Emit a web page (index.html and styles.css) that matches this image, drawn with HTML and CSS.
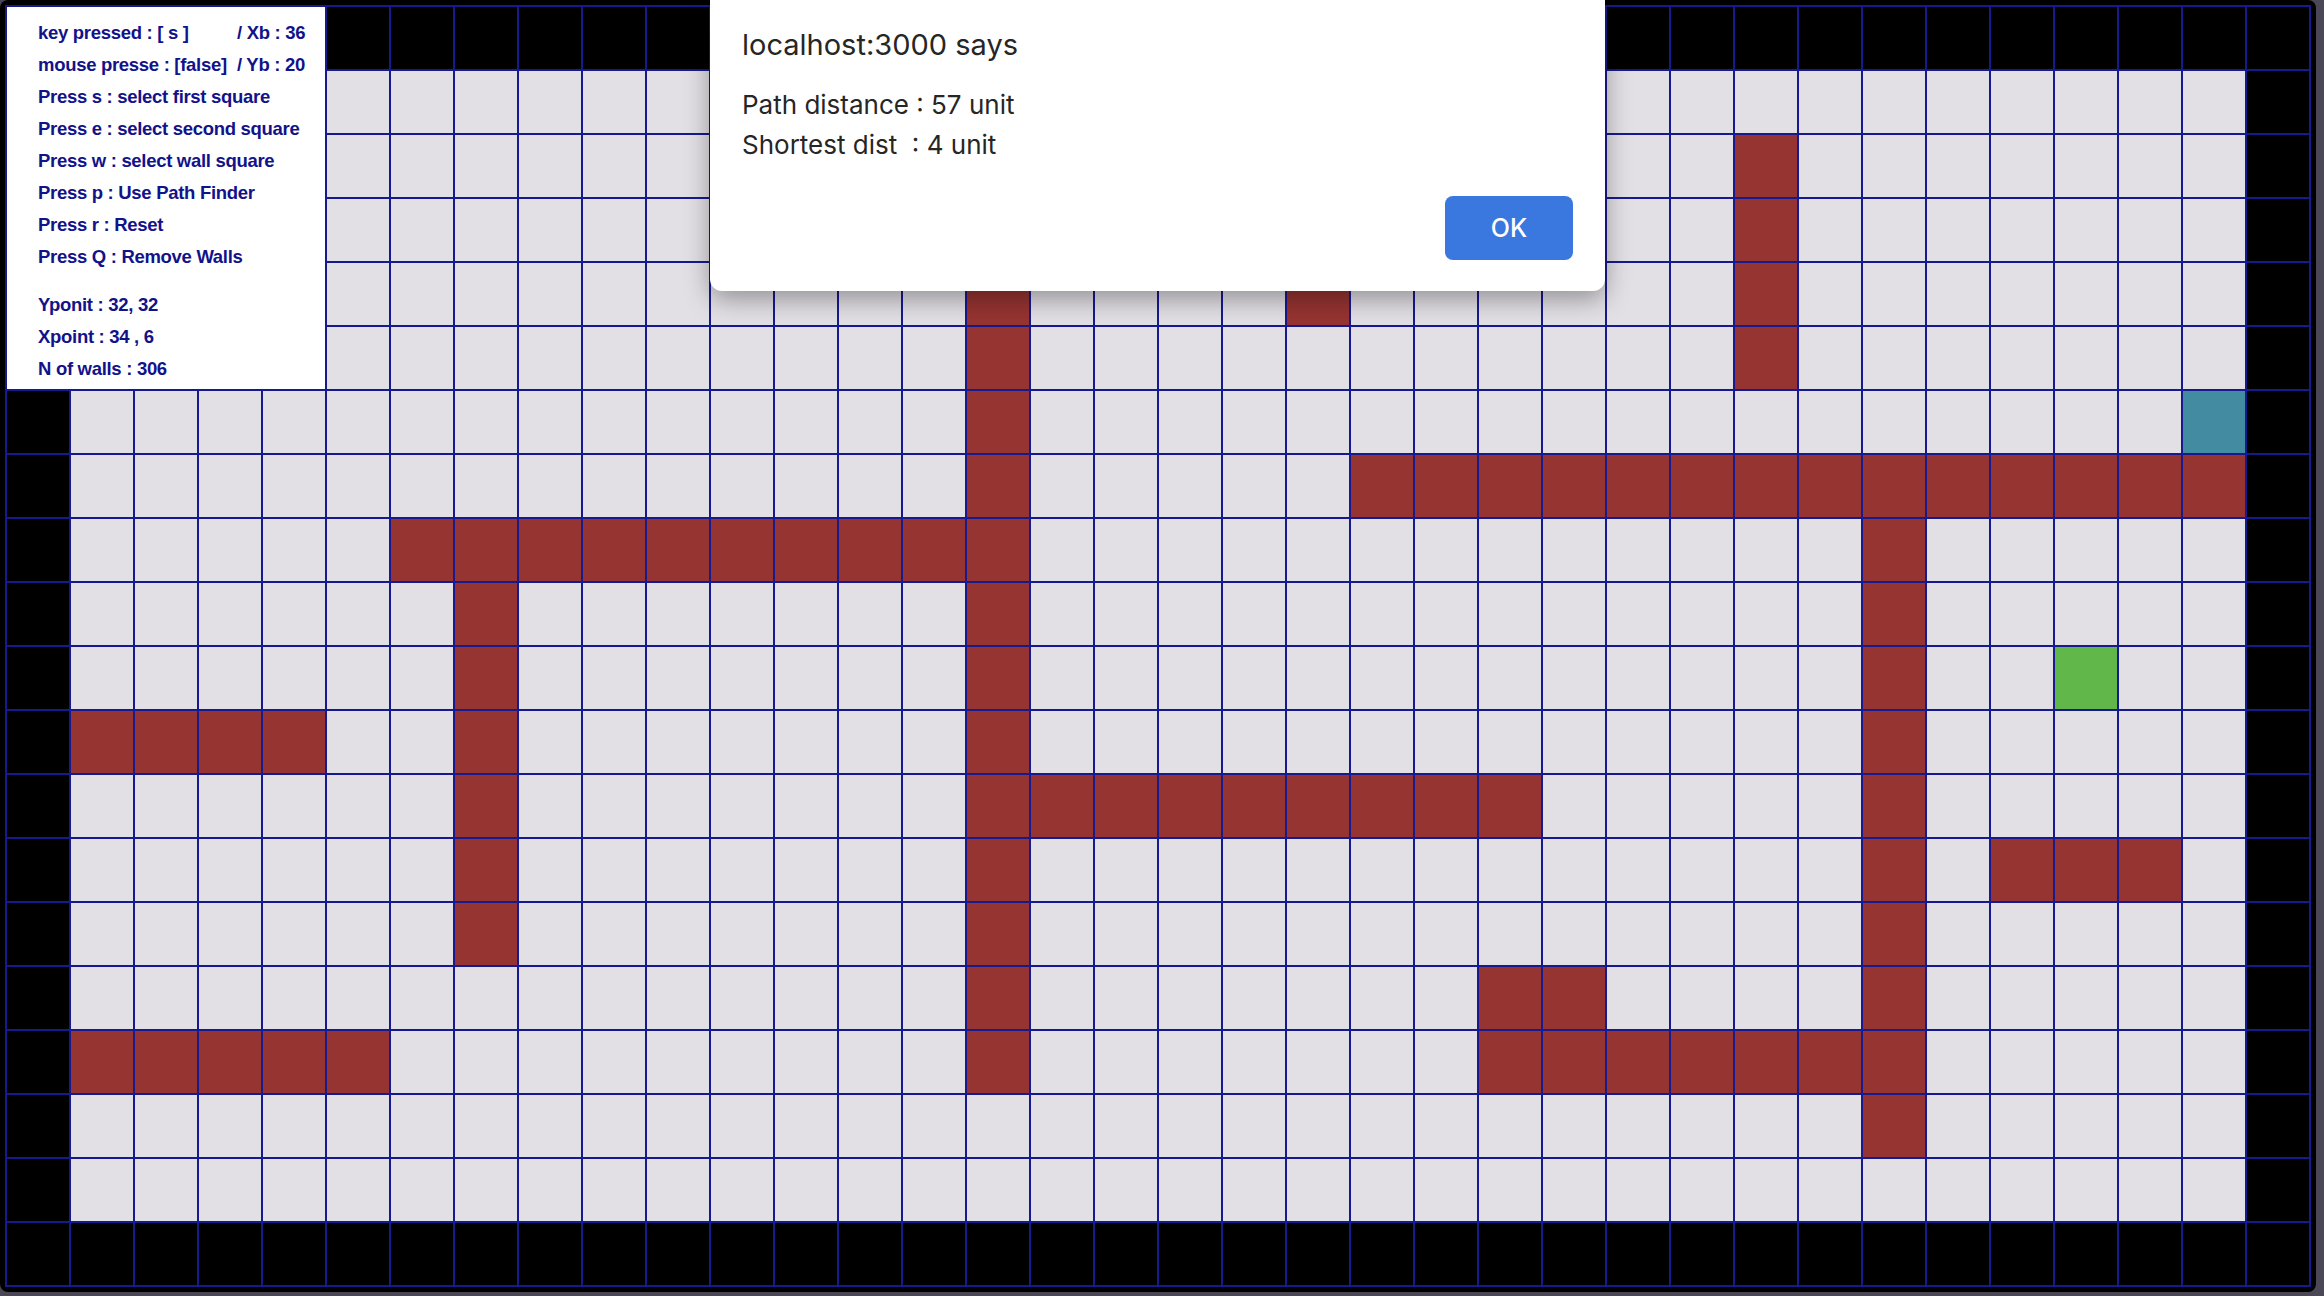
FILE: index.html
```html
<!DOCTYPE html>
<html lang="en">
<head>
<meta charset="utf-8">
<title>Path Finder</title>
<link rel="stylesheet" href="styles.css">
</head>
<body>
<div class="window">
  <div class="board" id="board"></div>
  <div class="info">
    <div class="row"><span>key pressed : [ s ]</span><span>/ Xb : 36</span></div>
    <div class="row"><span>mouse presse : [false]</span><span>/ Yb : 20</span></div>
    <div>Press s : select first square</div>
    <div>Press e : select second square</div>
    <div>Press w : select wall square</div>
    <div>Press p : Use Path Finder</div>
    <div>Press r : Reset</div>
    <div>Press Q : Remove Walls</div>
    <div class="gap">Yponit : 32, 32</div>
    <div>Xpoint : 34 , 6</div>
    <div>N of walls : 306</div>
  </div>
</div>
<div class="alert">
  <div class="alert-title">localhost:3000 says</div>
  <div class="alert-msg">
    <div>Path distance : 57 unit</div>
    <div class="pre">Shortest dist  : 4 unit</div>
  </div>
  <div class="alert-actions"><button class="ok">OK</button></div>
</div>
<script src="script.js"></script>
</body>
</html>
```
FILE: styles.css
```css
html, body {
  margin: 0;
  padding: 0;
}
body {
  background: #4a4856;
  width: 2324px;
  height: 1296px;
  overflow: hidden;
  position: relative;
}
.window {
  position: relative;
  width: 2316px;
  height: 1292px;
  background: #000;
  border-radius: 8px;
  padding: 5px 0 0 5px;
  box-sizing: border-box;
}
.board {
  display: grid;
  grid-template-columns: repeat(36, 62px);
  grid-auto-rows: 62px;
  gap: 2px;
  padding: 2px;
  background: #171a8e;
  width: max-content;
}
.board .cell { display: block; background: #e2dfe5; }
.board .cell.border { background: #000; }
.board .cell.wall { background: #963431; }
.board .cell.start { background: #438ba0; }
.board .cell.end { background: #62b74a; }

.info {
  position: absolute;
  left: 7px;
  top: 7px;
  width: 318px;
  height: 382px;
  background: #fff;
  box-sizing: border-box;
  padding: 10px 0 0 31px;
  font-family: "Liberation Sans", Arial, sans-serif;
  font-weight: bold;
  font-size: 18.5px;
  line-height: 32px;
  letter-spacing: -0.3px;
  color: #12128a;
  white-space: nowrap;
}
.info .row {
  display: grid;
  grid-template-columns: 199px auto;
}
.info .gap { margin-top: 16px; }

.alert {
  position: absolute;
  left: 710px;
  top: 0;
  width: 895px;
  height: 291px;
  background: #fff;
  border-radius: 0 0 12px 12px;
  box-shadow: 0 8px 26px rgba(0, 0, 0, 0.35);
  box-sizing: border-box;
  padding: 27px 32px 0 32px;
  font-family: Inter, "Noto Sans", sans-serif;
  color: #262626;
  display: flex;
  flex-direction: column;
}
.alert-title {
  font-size: 29px;
  line-height: 36px;
}
.alert-msg {
  margin-top: 22px;
  font-size: 26px;
  line-height: 40px;
}
.pre { white-space: pre; }
.alert-actions {
  display: flex;
  justify-content: flex-end;
  margin-top: 31px;
}
.ok {
  width: 128px;
  height: 64px;
  border: none;
  border-radius: 8px;
  background: #3a78df;
  color: #fff;
  font-family: Inter, "Noto Sans", sans-serif;
  font-size: 25px;
  font-weight: 500;
  padding: 0;
}
```
FILE: script.js
```js
(function () {
  var COLS = 36, ROWS = 20;
  var grid = [];
  for (var r = 0; r < ROWS; r++) {
    grid.push([]);
    for (var c = 0; c < COLS; c++) {
      grid[r].push((r === 0 || r === ROWS - 1 || c === 0 || c === COLS - 1) ? 'border' : '');
    }
  }
  // horizontal runs: [row, fromCol, toCol]
  var hRuns = [[4,20,20],[7,21,34],[8,6,15],[11,1,4],[12,15,23],[13,31,33],[15,23,24],[16,1,5],[16,23,29]];
  // vertical runs: [col, fromRow, toRow]
  var vRuns = [[27,2,5],[15,4,16],[29,8,17],[7,9,14]];
  hRuns.forEach(function (h) { for (var c = h[1]; c <= h[2]; c++) grid[h[0]][c] = 'wall'; });
  vRuns.forEach(function (v) { for (var r = v[1]; r <= v[2]; r++) grid[r][v[0]] = 'wall'; });
  grid[6][34] = 'start';
  grid[10][32] = 'end';
  var board = document.getElementById('board');
  var frag = document.createDocumentFragment();
  for (var r2 = 0; r2 < ROWS; r2++) {
    for (var c2 = 0; c2 < COLS; c2++) {
      var el = document.createElement('i');
      el.className = 'cell' + (grid[r2][c2] ? ' ' + grid[r2][c2] : '');
      frag.appendChild(el);
    }
  }
  board.appendChild(frag);
})();
```
